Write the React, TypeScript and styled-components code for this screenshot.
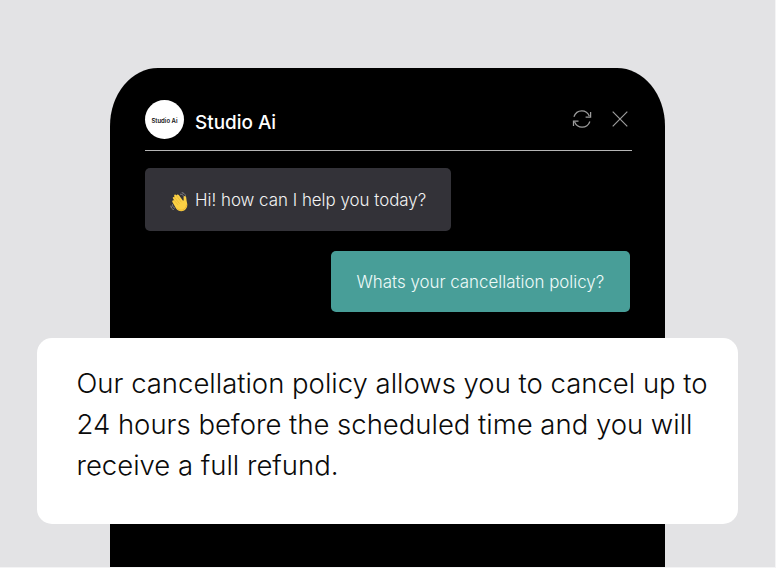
import React from 'react';
import styled, { createGlobalStyle } from 'styled-components';

const GlobalStyle = createGlobalStyle`
  * { box-sizing: border-box; }
  body {
    margin: 0;
    background: #f4f4f5;
    font-family: Inter, "Liberation Sans", sans-serif;
    overflow: hidden;
  }
`;

const Stage = styled.main`
  position: relative;
  display: flex;
  justify-content: flex-start;
  width: 775px;
  height: 567px;
  padding: 68px 0 0 110px;
  background: #e3e3e5;
  overflow: hidden;
`;

const Phone = styled.section`
  display: flex;
  flex-direction: column;
  width: 555px;
  height: 499px;
  padding: 32px 33px 0 35px;
  background: #000;
  border-radius: 48px 48px 0 0 / 58px 58px 0 0;
`;

const Header = styled.header`
  display: flex;
  align-items: flex-start;
  height: 51px;
  border-bottom: 1px solid #b5b5b5;
`;

const Avatar = styled.div`
  display: flex;
  align-items: center;
  justify-content: center;
  width: 39px;
  height: 39px;
  border-radius: 50%;
  background: #fff;
  color: #111;
  font-size: 6px;
  font-weight: 600;
  line-height: 8px;
  padding-top: 2px;
  white-space: nowrap;
`;

const Title = styled.h1`
  flex: 1;
  margin: 11px 0 0 11px;
  color: #fff;
  font-size: 18.9px;
  font-weight: 500;
  line-height: 24px;
`;

const Actions = styled.div`
  display: flex;
  align-items: center;
  gap: 20px;
  margin: 9.4px 4.5px 0 0;
`;

const IconButton = styled.button`
  display: flex;
  padding: 0;
  border: 0;
  background: none;
  color: #9c9c9c;
`;

const Messages = styled.div`
  display: flex;
  flex-direction: column;
  gap: 20px;
  padding: 17px 2px 0 0;
`;

const Bubble = styled.div<{ $from: 'bot' | 'user' }>`
  display: flex;
  align-items: center;
  align-self: ${({ $from }) => ($from === 'bot' ? 'flex-start' : 'flex-end')};
  width: ${({ $from }) => ($from === 'bot' ? 306 : 299)}px;
  height: ${({ $from }) => ($from === 'bot' ? 63 : 61)}px;
  padding-left: ${({ $from }) => ($from === 'bot' ? 25 : 25.5)}px;
  border-radius: 5px;
  background: ${({ $from }) => ($from === 'bot' ? '#333238' : '#489e98')};
  color: ${({ $from }) => ($from === 'bot' ? '#f2f2f3' : '#eefaf8')};
  font-size: 16.9px;
  font-weight: 300;
  line-height: 22px;
  white-space: nowrap;
`;

const Wave = styled.svg`
  flex: none;
  margin: 4px 5px 0 0;
`;

const Reply = styled.article`
  position: absolute;
  left: 37.3px;
  top: 338px;
  width: 700.4px;
  height: 185.5px;
  padding: 25px 0 0 39.2px;
  border-radius: 15px;
  background: #fff;
`;

const ReplyText = styled.p`
  margin: 0;
  width: 645px;
  color: #0a0a0a;
  font-size: 27.49px;
  font-weight: 300;
  line-height: 41px;
`;

function RefreshIcon() {
  return (
    <svg width="20" height="20" viewBox="0 0 20 20" fill="none" stroke="currentColor" strokeWidth="1.25">
      <path d="M1.9 7.8C3.2 4 6.3 1.8 9.8 1.8c3.4 0 6.2 2 7.6 5.4" />
      <path d="M18.6 3v5.1h-5" />
      <path d="M17.9 12.5c-1.3 3.6-4.3 5.7-7.8 5.7-3.4 0-6.2-2-7.6-5.4" />
      <path d="M1.5 17.1V12.1h5" />
    </svg>
  );
}

function CloseIcon() {
  return (
    <svg width="16" height="16" viewBox="0 0 16 16" fill="none" stroke="currentColor" strokeWidth="1.2">
      <path d="M.7.7l14.6 14.6M15.3.7.7 15.3" />
    </svg>
  );
}

function WavingHand() {
  return (
    <Wave width="20" height="20" viewBox="0 0 20 20" fill="none" aria-label="Waving hand">
      <g stroke="#85858a" strokeWidth="1" strokeLinecap="round">
        <path d="M10.5 2.2c1.5 0 2.7.8 3.3 2.1M12.1.7c1.600.2 2.800 1.200 3.300 2.600M2.500 12.700c-.1 1.500.7 2.700 2 3.300M.9 14c0 1.700 1 3 2.500 3.500" />
      </g>
      <path fill="#fad044" d="M2.700 8.600c.5-.5 1.200-.4 1.700.1L3 6.500c-.8-1.200.6-2.200 1.500-1.200L4.200 4c-.4-1.300 1.200-2 2-.9l.4.500c.1-1.300 1.500-1.500 2.200-.5l4.400 5.800c.5-.8.6-1.700.4-2.700-.3-1.400.3-2.400 1.400-2.300.8.100 1.100.7 1.200 1.600l.4 3.300c.2 1.500.8 2.800.7 4.500-.2 3.300-2.800 5.900-6 5.900-2.300 0-3.800-1.100-5.200-2.800L2.500 10.200c-.4-.6-.3-1.200.2-1.600z" />
      <path stroke="#dda62d" strokeWidth=".5" strokeLinecap="round" d="M4.400 8.700l3.500 4M4.500 5.400l4.800 6M6.600 3.700l4.500 6.200" />
      <path stroke="#eeb530" strokeWidth="1" strokeLinecap="round" d="M7.500 17c2.600 2.400 8.500 1.300 9.100-4" />
    </Wave>
  );
}

export default function App() {
  return (
    <>
      <GlobalStyle />
      <Stage>
        <Phone>
          <Header>
            <Avatar>Studio Ai</Avatar>
            <Title>Studio Ai</Title>
            <Actions>
              <IconButton aria-label="Restart chat"><RefreshIcon /></IconButton>
              <IconButton aria-label="Close chat"><CloseIcon /></IconButton>
            </Actions>
          </Header>
          <Messages>
            <Bubble $from="bot"><WavingHand />Hi! how can I help you today?</Bubble>
            <Bubble $from="user">Whats your cancellation policy?</Bubble>
          </Messages>
        </Phone>
        <Reply>
          <ReplyText>
            Our cancellation policy allows you to cancel up to 24 hours before the scheduled time and you will receive a full refund.
          </ReplyText>
        </Reply>
      </Stage>
    </>
  );
}
